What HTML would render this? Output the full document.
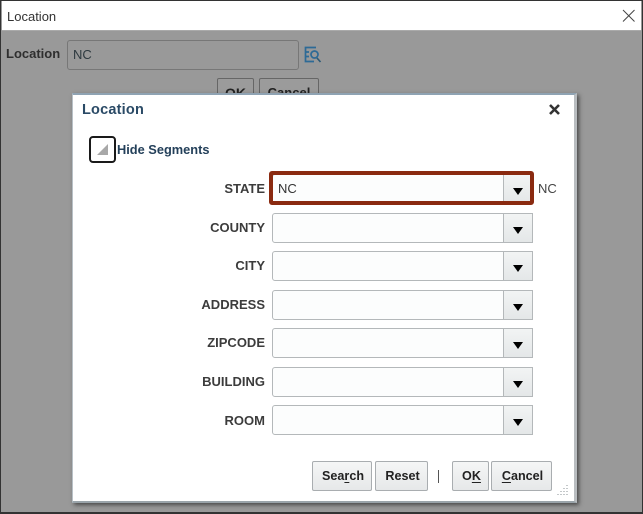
<!DOCTYPE html>
<html><head><meta charset="utf-8"><style>
html,body{margin:0;padding:0;width:643px;height:514px;overflow:hidden;background:#fff;font-family:"Liberation Sans",sans-serif}
#w{position:absolute;left:0;top:0;width:643px;height:514px;filter:blur(.35px)}
.a{position:absolute;box-sizing:border-box}
.l{position:absolute;right:378px;font-weight:bold;font-size:13px;letter-spacing:0;color:#3c3c3c;line-height:16px}
.i{position:absolute;left:272px;width:232px;height:30px;box-sizing:border-box;border:1px solid #b4b8ba;border-radius:3px 0 0 3px;background:#fcfdfd}
.d{position:absolute;left:503px;width:30px;height:30px;box-sizing:border-box;border:1px solid #b4b8ba;background:linear-gradient(#f2f4f4,#e4e7e8)}
.d:after{content:"";position:absolute;left:8.500px;top:12.500px;border-left:5.500px solid transparent;border-right:5.500px solid transparent;border-top:7px solid #000}
.b{position:absolute;top:461px;height:30px;box-sizing:border-box;border:1px solid #a9adb0;border-radius:2px;background:linear-gradient(#f5f6f6,#e6e8e9);font-weight:bold;font-size:12.600px;color:#222;text-align:center;line-height:28px;padding-left:2px}
u{text-underline-offset:2px}
</style></head><body><div id="w">
<div class="a" style="left:0;top:0;width:643px;height:514px;background:#999;border:1px solid #333;border-width:1px 1px 2px 1px"></div>
<div class="a" style="left:2px;top:1px;width:639px;height:30px;background:#fff;border-bottom:1px solid #aaa"></div>
<div class="a" style="left:7px;top:9px;font-size:13px;line-height:16px;color:#333">Location</div>
<svg class="a" style="left:621px;top:8px" width="15" height="15" viewBox="0 0 15 15"><path d="M2 2L13.500 13.500M13.500 2L2 13.500" stroke="#444" stroke-width="1" fill="none"/></svg>
<div class="a" style="left:6px;top:46px;font-weight:bold;font-size:13px;line-height:16px;color:#2e2e2e">Location</div>
<div class="a" style="left:67px;top:40px;width:232px;height:30px;border:1px solid #777;border-radius:3px;background:#999"></div>
<div class="a" style="left:73px;top:47px;font-size:13px;line-height:16px;color:#2e3a40">NC</div>
<svg class="a" style="left:304px;top:45px" width="18" height="19" viewBox="0 0 18 19"><path d="M12 2.500H1.500V16.500H10M1.500 7H5M1.500 11.500H5" stroke="#2d6a96" stroke-width="1.700" fill="none"/><circle cx="10.500" cy="9.500" r="3.500" stroke="#2d6a96" stroke-width="1.700" fill="none"/><path d="M13 13L16.500 17" stroke="#2d5a76" stroke-width="1.700"/></svg>
<div class="a" style="left:217px;top:78px;width:37px;height:30px;border:1px solid #666;border-radius:2px;font-weight:bold;font-size:14px;text-align:center;line-height:28px;color:#222;background:#9b9b9b">OK</div>
<div class="a" style="left:259px;top:78px;width:60px;height:30px;border:1px solid #666;border-radius:2px;font-weight:bold;font-size:13px;text-align:center;line-height:28px;color:#222;background:#9b9b9b">Cancel</div>
<div class="a" style="left:72px;top:93px;width:505px;height:410px;background:#fff;border:1px solid #b8c0c6;border-top:2px solid #8fa3b3;border-right:3px solid #b9bdc0;border-bottom:2px solid #9aa4aa;box-shadow:2px 2px 4px rgba(40,40,40,.7)"></div>
<div class="a" style="left:82px;top:101px;font-weight:bold;font-size:14.500px;letter-spacing:.2px;line-height:18px;color:#2a4a66">Location</div>
<svg class="a" style="left:548px;top:103px" width="13" height="13" viewBox="0 0 13 13"><path d="M2 2L11 11M11 2L2 11" stroke="#333" stroke-width="2.600" fill="none"/></svg>
<div class="a" style="left:89px;top:136px;width:27px;height:27px;border:2px solid #1a1a1a;border-radius:4px;background:#fff"></div>
<svg class="a" style="left:96px;top:142px" width="13" height="14"><path d="M1 13H12V2Z" fill="#a8a8a8"/></svg>
<div class="a" style="left:117px;top:142px;font-weight:bold;font-size:12.800px;letter-spacing:0;line-height:16px;color:#24405a">Hide Segments</div>
<div class="l" style="top:181px">STATE</div>
<div class="l" style="top:220px">COUNTY</div>
<div class="l" style="top:258px">CITY</div>
<div class="l" style="top:297px">ADDRESS</div>
<div class="l" style="top:335px">ZIPCODE</div>
<div class="l" style="top:374px">BUILDING</div>
<div class="l" style="top:413px">ROOM</div>
<div class="i" style="top:174px"></div><div class="d" style="top:174px"></div>
<div class="a" style="left:269px;top:171px;width:265px;height:34px;border:4px solid #8a2a10;border-radius:3px"></div>
<div class="a" style="left:278px;top:181px;font-size:13px;line-height:16px;color:#333">NC</div>
<div class="a" style="left:538px;top:181px;font-size:13px;line-height:16px;color:#444">NC</div>
<div class="i" style="top:213px"></div><div class="d" style="top:213px"></div>
<div class="i" style="top:251px"></div><div class="d" style="top:251px"></div>
<div class="i" style="top:290px"></div><div class="d" style="top:290px"></div>
<div class="i" style="top:328px"></div><div class="d" style="top:328px"></div>
<div class="i" style="top:367px"></div><div class="d" style="top:367px"></div>
<div class="i" style="top:405px"></div><div class="d" style="top:405px"></div>
<div class="b" style="left:312px;width:60px">Sea<u>r</u>ch</div>
<div class="b" style="left:375px;width:53px">Reset</div>
<div class="a" style="left:438px;top:470px;width:1px;height:13px;background:#555"></div>
<div class="b" style="left:452px;width:37px">O<u>K</u></div>
<div class="b" style="left:491px;width:61px"><u>C</u>ancel</div>
<svg class="a" style="left:557px;top:484px" width="12" height="12"><path d="M10 1v1M7 4v1M10 4v1M4 7v1M7 7v1M10 7v1M1 10v1M4 10v1M7 10v1M10 10v1" stroke="#c4c8ca" stroke-width="2" fill="none"/></svg>
</div></body></html>
